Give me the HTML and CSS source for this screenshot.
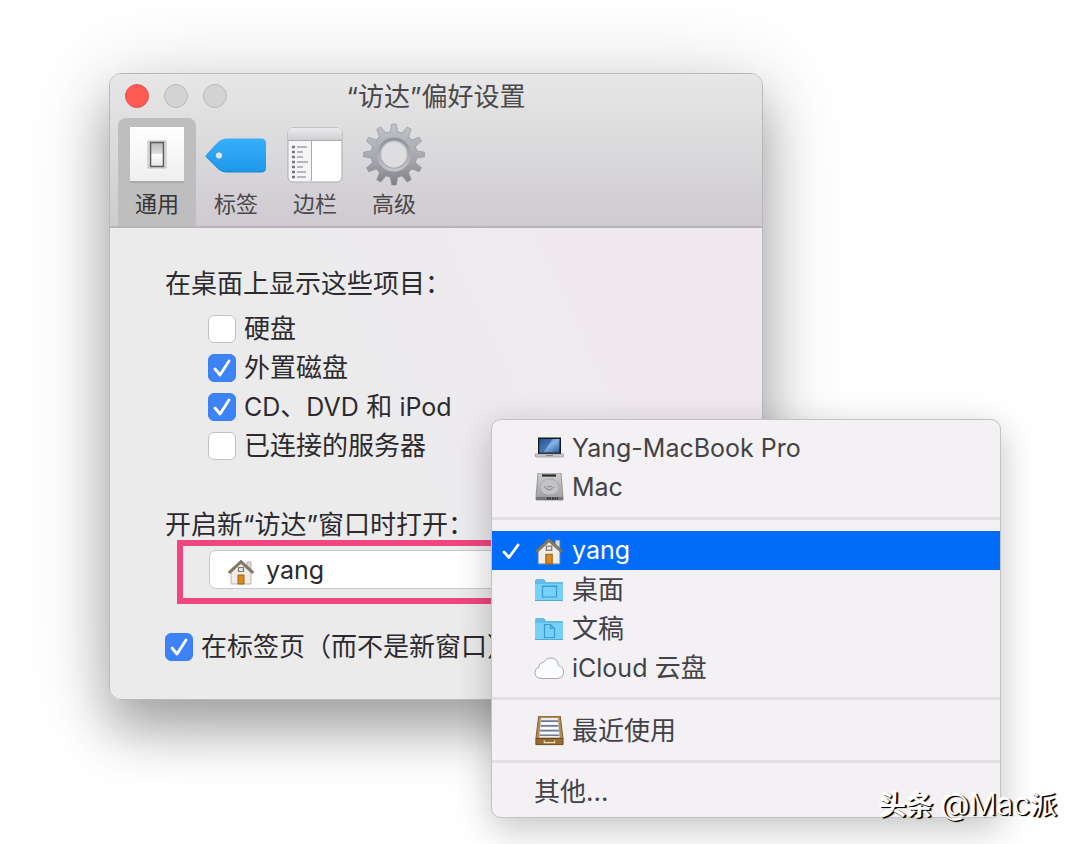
FILE: index.html
```
<!DOCTYPE html>
<html lang="zh-CN">
<head>
<meta charset="utf-8">
<title>“访达”偏好设置</title>
<link rel="stylesheet" href="styles.css">
</head>
<body>
<svg class="defs" width="0" height="0" aria-hidden="true">
  <defs>
    <linearGradient id="gWhite" x1="0" y1="0" x2="0" y2="1"><stop offset="0" stop-color="#fff"/><stop offset="1" stop-color="#efeff1"/></linearGradient>
    <linearGradient id="gSwitch" x1="0" y1="0" x2="0" y2="1"><stop offset="0" stop-color="#b9b9bb"/><stop offset=".45" stop-color="#dcdcde"/><stop offset=".5" stop-color="#fff"/><stop offset="1" stop-color="#e4e4e6"/></linearGradient>
    <linearGradient id="gTag" x1="0" y1="0" x2="0" y2="1"><stop offset="0" stop-color="#39affb"/><stop offset="1" stop-color="#1d98ea"/></linearGradient>
    <linearGradient id="gBar" x1="0" y1="0" x2="0" y2="1"><stop offset="0" stop-color="#ebebed"/><stop offset="1" stop-color="#cfcfd2"/></linearGradient>
    <linearGradient id="gGear" gradientUnits="userSpaceOnUse" x1="0" y1="1" x2="0" y2="62"><stop offset="0" stop-color="#bfc3c9"/><stop offset=".6" stop-color="#a4a6ab"/><stop offset="1" stop-color="#7f8186"/></linearGradient>
    <linearGradient id="gRing" x1="0" y1="0" x2="0" y2="1"><stop offset="0" stop-color="#8f9298"/><stop offset="1" stop-color="#c4c6ca"/></linearGradient>
    <linearGradient id="gScreen" x1="0" y1="0" x2="1" y2="1"><stop offset="0" stop-color="#2d62a8"/><stop offset=".5" stop-color="#86b4e6"/><stop offset="1" stop-color="#2b5c9d"/></linearGradient>
    <linearGradient id="gDisk" x1="0" y1="0" x2="0" y2="1"><stop offset="0" stop-color="#cfcfd0"/><stop offset="1" stop-color="#9c9c9e"/></linearGradient>
    <symbol id="house" viewBox="0 0 28 28">
      <path d="M20 4h4v8h-4z" fill="#e7d8d0" stroke="#a79a92" stroke-width=".7"/>
      <path d="M4 12 14 4l10 8v14H4z" fill="#f1ede6" stroke="#a9a59f" stroke-width=".8"/>
      <path d="m1 14 13-12 13 12-2 1.500L14 5.500 3 15.500z" fill="#807b68" stroke="#6c6757" stroke-width=".6" stroke-linejoin="round"/>
      <path d="M11.500 9.500h5v4h-5z" fill="#dfe6ea" stroke="#85786c" stroke-width="1.200"/>
      <path d="M11 17h6v9h-6z" fill="#d98a1d" stroke="#9a641a"/>
    </symbol>
    <symbol id="folder" viewBox="0 0 30 26">
      <path d="M1 4q0-2 2-2h7l2 3h16q1 0 1 1v17q0 1-1 1H2q-1 0-1-1z" fill="#62bce8"/>
      <path d="M1 7h28v15.500q0 1-1 1H2q-1 0-1-1z" fill="#76d0f7"/>
      <path d="M1 23.500h28" stroke="#55a9d4"/>
    </symbol>
  </defs>
</svg>

<main class="desktop">
  <section class="window" aria-label="“访达”偏好设置">
    <header class="chrome">
      <div class="titlebar">
        <div class="lights">
          <button class="light light-close" aria-label="关闭"></button>
          <button class="light" aria-label="最小化"></button>
          <button class="light" aria-label="缩放"></button>
        </div>
        <h1 class="title">“访达”偏好设置</h1>
      </div>
      <nav class="tabs">
        <button class="tab tab-active">
          <svg class="tab-icon" viewBox="0 0 64 64">
            <path d="M5 6h54v54H5z" fill="#aaa"/><path d="M5 4h54v54H5z" fill="url(#gWhite)"/>
            <path d="M23 18h18v27H23z" fill="#f4f4f4" stroke="#b9b9b9"/>
            <path d="M25.500 19.500h13v24h-13z" fill="url(#gSwitch)" stroke="#5b5b5d" stroke-width="1.600"/>
          </svg>
          <span>通用</span>
        </button>
        <button class="tab">
          <svg class="tab-icon" viewBox="0 0 64 64">
            <path d="M1.500 33.500 14 20q4-3.500 9-3.500h34q5 0 5 5v23q0 5-5 5H23q-5 0-9-3.500z" fill="#1685cd"/>
            <path d="M1.500 32.500 14 19q4-3.500 9-3.500h34q5 0 5 5v23q0 5-5 5H23q-5 0-9-3.500z" fill="url(#gTag)"/>
            <circle cx="15" cy="32.500" r="3.700" fill="#d5eaf8" stroke="#2587cb" stroke-width=".8"/>
          </svg>
          <span>标签</span>
        </button>
        <button class="tab">
          <svg class="tab-icon" viewBox="0 0 64 64">
            <rect x="5" y="5" width="54" height="54" rx="5" fill="#fff" stroke="#a8a8ac"/>
            <path d="M5 17v-7q0-5 5-5h44q5 0 5 5v7z" fill="url(#gBar)"/>
            <path d="M5 17.500h54" stroke="#aaaaae"/><path d="M6 18h22v40H11q-5 0-5-5z" fill="#f5f5f7"/><path d="M28.500 18v40" stroke="#aaaaad"/>
            <path d="M9 24h3m-3 5h3m-3 5h3m-3 5h3m-3 5h3m-3 5h3m-3 5h3" stroke="#77777b" stroke-width="2.500"/>
            <path d="M14 24h10m-10 5h6m-6 5h6m-6 5h11m-11 5h6m-6 5h9m-9 5h9" stroke="#a2a2a6" stroke-width="1.600"/>
          </svg>
          <span>边栏</span>
        </button>
        <button class="tab">
          <svg class="tab-icon" viewBox="0 0 64 64">
            <g fill="url(#gGear)" stroke="#909297" stroke-width=".6">
              <circle cx="32" cy="31.500" r="23"/>
              <path id="gearTeeth" d=""/>
            </g>
            <circle cx="32" cy="31.500" r="22" fill="url(#gGear)"/>
            <circle cx="32" cy="31.500" r="15.500" fill="none" stroke="url(#gRing)" stroke-width="3"/>
            <circle cx="32" cy="31.500" r="13" fill="#dedde0" stroke="#cbccd0"/>
          </svg>
          <span>高级</span>
        </button>
      </nav>
    </header>

    <div class="content">
      <fieldset class="group">
        <legend class="heading">在桌面上显示这些项目：</legend>
        <label class="check"><input type="checkbox">硬盘</label>
        <label class="check"><input type="checkbox" checked>外置磁盘</label>
        <label class="check"><input type="checkbox" checked><span><span class="latin">CD</span>、<span class="latin">DVD</span> 和 <span class="latin">iPod</span></span></label>
        <label class="check"><input type="checkbox">已连接的服务器</label>
      </fieldset>
      <label class="heading" for="target">开启新“访达”窗口时打开：</label>
      <div class="highlight">
        <div class="picker">
          <svg class="picker-icon" aria-hidden="true"><use href="#house"/></svg>
          <select id="target" class="picker-select latin"><option>yang</option></select>
        </div>
      </div>
      <label class="check check-last"><input type="checkbox" checked>在标签页（而不是新窗口）</label>
    </div>
  </section>

  <div class="menu" role="menu">
    <button class="item latin" role="menuitem">
      <svg class="icon" viewBox="0 0 30 30">
        <path d="M4 3.500h23V20H4z" fill="#17181c"/><path d="M5.500 5h20v13.500h-20z" fill="url(#gScreen)"/><path d="M5.500 5h13l-9 13.500h-4z" fill="#1f4f92" opacity=".6"/>
        <path d="M1 20h29v2l-1 1H2l-1-1z" fill="#c9c9cc" stroke="#8e8e92" stroke-width=".6"/><path d="M12 21.500h7" stroke="#88888c"/>
      </svg>Yang-MacBook Pro</button>
    <button class="item latin" role="menuitem">
      <svg class="icon" viewBox="0 0 30 30">
        <path d="M4 0h23l2 24v3H2v-3z" fill="url(#gDisk)" stroke="#88888b" stroke-width=".8"/><path d="M2 24h27v3H2z" fill="#77777a"/>
        <path d="M8 2.500h14" stroke="#29292b" stroke-width="2.200"/><path d="M13 25.500h11" stroke="#222" stroke-width="2" stroke-dasharray="1.500 1"/>
        <ellipse cx="15.500" cy="14" rx="9.500" ry="8" fill="#c3c3c5" stroke="#ababad"/><path d="M10 13q2 4 6 4l4-3m-7-1q2 2 5 0" fill="none" stroke="#848487"/>
      </svg>Mac</button>
    <hr class="rule">
    <button class="item item-selected latin" role="menuitem">
      <svg class="mark" viewBox="0 0 20 20" aria-hidden="true"><path d="m3 11 5 5.500L17 4" fill="none" stroke="#fff" stroke-width="2.800" stroke-linecap="round" stroke-linejoin="round"/></svg>
      <svg class="icon"><use href="#house"/></svg>yang</button>
    <button class="item" role="menuitem">
      <svg class="icon" viewBox="0 0 30 26"><use href="#folder"/><path d="M8.500 9h14v11h-14zM7.500 9.500h16" fill="none" stroke="#3d9cc9" stroke-width="1.200"/></svg>桌面</button>
    <button class="item" role="menuitem">
      <svg class="icon" viewBox="0 0 30 26"><use href="#folder"/><path d="M10.500 8.500h6l4 4v9h-10zM16.500 8.500v4h4" fill="none" stroke="#3d9cc9" stroke-width="1.200"/></svg>文稿</button>
    <button class="item" role="menuitem">
      <svg class="icon" viewBox="0 0 30 30"><path d="M7 25.500Q1 25 1 19.500q0-4 4-5.500 0-4.500 4.500-4.500Q12 5 17 5q6.500 0 7.500 7.500 5 1.500 5 6.500 0 6-6 6.500z" fill="#fafcfd" stroke="#a6a8ab"/></svg><span><span class="latin">iCloud</span> 云盘</span></button>
    <hr class="rule">
    <button class="item" role="menuitem">
      <svg class="icon" viewBox="0 0 30 32">
        <path d="M4 0h23l3 24H1z" fill="#b28b50" stroke="#7d5b2c"/><path d="M6.500 2h18l2 21h-22z" fill="#e9edf4"/>
        <path d="M6.500 5.500h18M6 10.500h19M5.500 15.500h20M5 20.500h21" stroke="#707c94" stroke-width="1.800"/><path d="M7 8h17M6 13h19M6 18h19" stroke="#fff" stroke-width="1.500"/>
        <path d="M1 24h29v6.500H1z" fill="#966c34" stroke="#6a481c"/><path d="M10 26v2.500h11V26" fill="none" stroke="#eee1c4" stroke-width="1.300"/>
      </svg>最近使用</button>
    <hr class="rule">
    <button class="item item-other" role="menuitem">其他...</button>
  </div>

  <p class="watermark"><b>头条</b> <span class="handle">@Mac</span>派</p>
</main>
<script src="gear.js"></script>
</body>
</html>
```
FILE: gear.js
```
// Twelve teeth, spaced evenly round the hub of the gear icon.
const tooth = [[-4, -21], [-2.3, -30.5], [2.3, -30.5], [4, -21]];
let d = "";
for (let i = 0; i < 12; i++) {
  const a = (i * Math.PI) / 6;
  const points = tooth.map(([x, y]) => [
    32 + x * Math.cos(a) - y * Math.sin(a),
    31.5 + x * Math.sin(a) + y * Math.cos(a),
  ]);
  d += "M" + points.map((p) => p.map((n) => n.toFixed(2)).join(" ")).join("L") + "Z";
}
document.getElementById("gearTeeth").setAttribute("d", d);
```
FILE: styles.css
```
* { box-sizing: border-box; }

body {
  margin: 0;
  background: #fff;
  color: #2c2a2e;
  font: 26px/39px Inter, "Noto Sans CJK SC", sans-serif;
}

button, select { font: inherit; color: inherit; border: 0; background: none; padding: 0; }
.defs { position: absolute; }
.latin { font-size: 25px; }

.desktop {
  position: relative;
  min-height: 100vh;
  padding: 73px 24px 24px 109px;
  overflow: hidden;
}

.window {
  max-width: 654px;
  border: 1px solid #b9b7ba;
  border-radius: 12px;
  background: linear-gradient(65deg, #ebebec 40%, #f0eaf0 70%);
  box-shadow: 0 30px 50px rgba(0, 0, 0, .28), 0 10px 90px rgba(0, 0, 0, .18);
}

.chrome {
  border-bottom: 2px solid #b9b4ba;
  border-radius: 11px 11px 0 0;
  background: linear-gradient(#e7e7e7, #dadadc 50%, #cfcad0);
}

.titlebar {
  display: grid;
  grid-template-columns: 1fr auto 1fr;
  align-items: center;
  height: 44px;
  padding: 0 15px;
}

.lights { display: flex; gap: 15px; }
.light { width: 24px; height: 24px; border: 1px solid #bcbcbd; border-radius: 50%; background: #d3d3d4; }
.light-close { border-color: #ea5048; background: #fd5b54; }
.title { margin: 0; color: #4a484b; font-size: 26px; font-weight: 400; }

.tabs { display: flex; gap: 1px; padding-left: 8px; }
.tab {
  display: flex;
  flex-direction: column;
  align-items: center;
  width: 78px;
  height: 108px;
  padding-top: 5px;
  gap: 1px;
  border-radius: 8px 8px 0 0;
  color: #4a484b;
  font-size: 22px;
  line-height: 32px;
}
.tab-active { background: #bfbebf; color: #353436; }
.tab-icon { width: 64px; height: 64px; }

.content { padding: 36px 55px 33px; }
.group { display: grid; margin: 0 0 40px; padding: 0; border: 0; }
.group .check { margin-left: 43px; }
.heading { display: block; padding: 0; margin-bottom: 6px; }

.check { display: flex; align-items: center; gap: 8px; height: 39px; white-space: nowrap; }
.check input {
  appearance: none;
  flex: none;
  width: 28px;
  height: 28px;
  margin: 0;
  border: 1px solid #c2c0c3;
  border-radius: 6px;
  background: #fff;
}
.check input:checked {
  border-color: #3b7ff0;
  background: #3e83f6 url("data:image/svg+xml,%3Csvg xmlns='http://www.w3.org/2000/svg' viewBox='0 0 26 26'%3E%3Cpath d='m6 14 5 6 9-14' fill='none' stroke='white' stroke-width='2.800' stroke-linecap='round' stroke-linejoin='round'/%3E%3C/svg%3E");
}
.check-last { margin-top: 23px; }

.highlight { margin: -10px -20px 0 12px; padding: 4px 26px 9px; border: 6px solid #ed477e; }
.picker { position: relative; }
.picker-icon { position: absolute; left: 18px; top: 8px; width: 28px; height: 28px; }
.picker-select {
  display: block;
  appearance: none;
  width: 100%;
  height: 39px;
  padding-left: 56px;
  border: 1px solid #cac8ca;
  border-radius: 7px;
  background: #fff;
}

.menu {
  position: absolute;
  left: 491px;
  top: 419px;
  width: 510px;
  padding: 9px 0;
  border: 1px solid #c4c2c5;
  border-radius: 10px;
  background: #f3f1f4;
  box-shadow: 0 10px 36px rgba(0, 0, 0, .24);
  color: #444246;
}
.item {
  position: relative;
  display: flex;
  align-items: center;
  gap: 8px;
  width: 100%;
  height: 39px;
  padding-left: 42px;
  text-align: left;
}
.item-selected { background: #006cf8; color: #fff; }
.item-other { height: 34px; }
.icon { flex: none; width: 30px; height: 30px; }
.mark { position: absolute; left: 9px; top: 10px; width: 20px; height: 20px; }
.rule { height: 3px; margin: 10px 0 11px; border: 0; background: #e1dfe2; }

.watermark {
  position: absolute;
  right: 23px;
  bottom: 19px;
  margin: 0;
  color: #fff;
  font-size: 27px;
  text-shadow: 1px 1px 0 #000, 2px 1px 1px #000, -1px -1px 1px #fff;
}
.handle { font-size: 30px; font-weight: 300; }
```
